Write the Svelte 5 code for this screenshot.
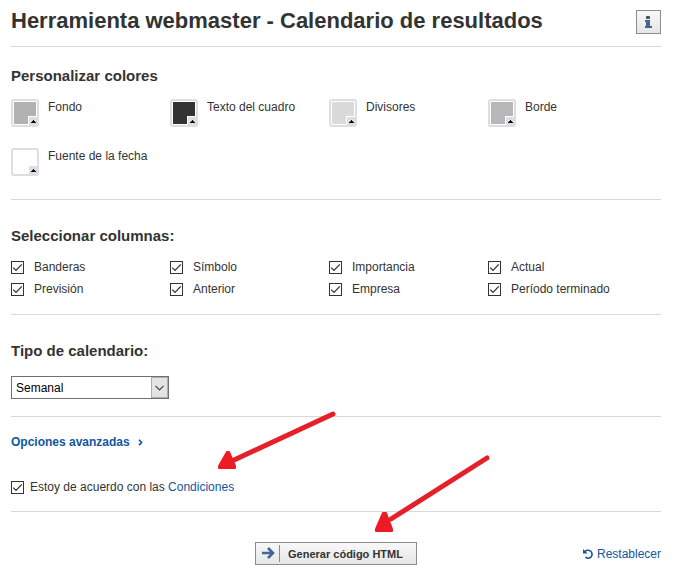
<script>
  let colors = $state([
    { id: 'bg', label: 'Fondo', value: '#b2b2b2' },
    { id: 'text', label: 'Texto del cuadro', value: '#333333' },
    { id: 'dividers', label: 'Divisores', value: '#dadada' },
    { id: 'border', label: 'Borde', value: '#b8b8b8' },
    { id: 'date', label: 'Fuente de la fecha', value: '#ffffff' }
  ]);

  let columns = $state([
    { id: 'flags', label: 'Banderas', checked: true },
    { id: 'symbol', label: 'Símbolo', checked: true },
    { id: 'importance', label: 'Importancia', checked: true },
    { id: 'actual', label: 'Actual', checked: true },
    { id: 'forecast', label: 'Previsión', checked: true },
    { id: 'previous', label: 'Anterior', checked: true },
    { id: 'company', label: 'Empresa', checked: true },
    { id: 'period', label: 'Período terminado', checked: true }
  ]);

  let calendarType = $state('weekly');
  let agreed = $state(true);

  function reset() {
    columns.forEach((c) => (c.checked = true));
    calendarType = 'weekly';
    agreed = true;
  }
</script>

<main class="page">
  <header class="header">
    <h1>Herramienta webmaster - Calendario de resultados</h1>
    <button class="info" type="button" aria-label="Información">
      <svg width="7" height="12" viewBox="0 0 7 12">
        <rect x="1" y="0" width="4" height="3" rx="1" fill="#3d5468" />
        <path d="M0 4h5v6h2v2H0v-2h1V6H0z" fill="#44658c" />
      </svg>
    </button>
  </header>

  <section class="section first">
    <h2>Personalizar colores</h2>
    <div class="grid swatches">
      {#each colors as color (color.id)}
        <div class="color">
          <button class="swatch" type="button" id={color.id} aria-label={color.label}>
            <span class="fill" style="background: {color.value}"></span>
            <svg class="corner" width="8" height="8" viewBox="0 0 8 8">
              <rect width="8" height="8" fill="#dcdee3" />
              <path d="M4 3h1v1h1v1h1v1H2V5h1V4h1z" fill="#111" />
            </svg>
          </button>
          <label for={color.id}>{color.label}</label>
        </div>
      {/each}
    </div>
  </section>

  <section class="section">
    <h2>Seleccionar columnas:</h2>
    <div class="grid columns">
      {#each columns as column (column.id)}
        <label class="check">
          <input type="checkbox" bind:checked={column.checked} />
          {column.label}
        </label>
      {/each}
    </div>
  </section>

  <section class="section type">
    <h2><label for="calendar-type">Tipo de calendario:</label></h2>
    <div class="select">
      <select id="calendar-type" bind:value={calendarType}>
        <option value="weekly">Semanal</option>
        <option value="daily">Diario</option>
      </select>
      <span class="toggle">
        <svg width="9" height="6" viewBox="0 0 9 6">
          <path d="M.5 .8l4 4 4-4" fill="none" stroke="#444" stroke-width="1.2" />
        </svg>
      </span>
    </div>
  </section>

  <section class="section terms">
    <a class="advanced" href="#advanced">
      Opciones avanzadas
      <svg width="5" height="7" viewBox="0 0 5 7">
        <path d="M1 .7l2.6 2.8L1 6.3" fill="none" stroke="#1256a0" stroke-width="1.6" />
      </svg>
    </a>
    <div class="agree">
      <input id="agree" type="checkbox" bind:checked={agreed} />
      <p><label for="agree">Estoy de acuerdo con las</label> <a href="#terms">Condiciones</a></p>
    </div>
    <svg class="pointer to-terms" width="120" height="60" viewBox="0 0 120 60" aria-hidden="true">
      <path d="M117 4L18 50" stroke="#e5202a" stroke-width="5" stroke-linecap="round" />
      <path d="M11 42L3 56v2h16v-2L13 42z" fill="#ed1c24" stroke="#ed1c24" stroke-width="2" stroke-linejoin="round" />
    </svg>
  </section>

  <footer class="footer">
    <button class="generate" type="button" disabled={!agreed}>
      <span class="arrow">
        <svg width="13" height="12" viewBox="0 0 13 12">
          <path d="M0 6h11M6 1l5 5-5 5" fill="none" stroke="#44659a" stroke-width="2.6" />
        </svg>
      </span>
      Generar código HTML
    </button>
    <button class="reset" type="button" onclick={reset}>
      <svg width="10" height="10" viewBox="0 0 10 10">
        <path d="M1.6 3.2A4 4 0 1 1 2.4 8.2" fill="none" stroke="#1256a0" stroke-width="1.6" />
        <path d="M0 0v4.6h4.6z" fill="#1256a0" />
      </svg>
      Restablecer
    </button>
    <svg class="pointer to-generate" width="120" height="80" viewBox="0 0 120 80" aria-hidden="true">
      <path d="M114 4L18 65" stroke="#e5202a" stroke-width="5" stroke-linecap="round" />
      <path d="M10 59L3 75v2h16v-2L13 59z" fill="#ed1c24" stroke="#ed1c24" stroke-width="2" stroke-linejoin="round" />
    </svg>
  </footer>
</main>

<style>
  :global(body) {
    margin: 0;
    background: #fff;
  }

  .page {
    padding: 0 17px 10px 11px;
    font-family: 'Liberation Sans', Arial, sans-serif;
    font-size: 12px;
    line-height: 16px;
    color: #333;
  }

  button,
  select {
    font-family: inherit;
    font-size: inherit;
    color: inherit;
  }

  a {
    color: #1256a0;
    text-decoration: none;
  }

  p {
    margin: 0;
  }

  svg {
    display: block;
  }

  .header {
    display: flex;
    align-items: flex-start;
    justify-content: space-between;
    padding: 10px 0 12px;
    border-bottom: 1px solid #d9d9d9;
  }

  h1 {
    margin: 0;
    font-size: 22px;
    line-height: 22px;
  }

  h2 {
    margin: 0;
    font-size: 15px;
    line-height: 20px;
  }

  .info {
    display: flex;
    align-items: center;
    justify-content: center;
    width: 25px;
    height: 24px;
    padding: 0;
    border: 1px solid #8c8c8c;
    background: linear-gradient(#f8f8f8, #e6e6e6);
  }

  .section {
    padding: 26px 0 14px;
    border-bottom: 1px solid #d9d9d9;
  }

  .section.first {
    padding: 19px 0 23px;
  }

  .section.type {
    padding-bottom: 17px;
  }

  .section.terms {
    position: relative;
    padding: 15px 0 13px;
  }

  .grid {
    display: grid;
    grid-template-columns: repeat(4, 1fr);
    padding-right: 14px;
  }

  .swatches {
    row-gap: 21px;
    margin-top: 13px;
  }

  .color {
    display: flex;
    gap: 9px;
  }

  .swatch {
    position: relative;
    width: 28px;
    height: 28px;
    padding: 1px;
    border: 2px solid #dcdee3;
    border-radius: 3px;
    background: #fff;
  }

  .fill {
    display: block;
    height: 100%;
  }

  .corner {
    position: absolute;
    right: 0;
    bottom: 0;
    border-top: 1px solid #fff;
    border-left: 1px solid #fff;
  }

  .columns {
    margin-top: 10px;
  }

  .check,
  .agree {
    display: flex;
    align-items: center;
    height: 22px;
  }

  .check {
    gap: 10px;
  }

  .agree {
    gap: 6px;
    margin-top: 24px;
  }

  input[type='checkbox'] {
    appearance: none;
    width: 13px;
    height: 13px;
    margin: 0;
    border: 1px solid #333;
    background: #fff;
  }

  input[type='checkbox']:checked {
    background: url("data:image/svg+xml,%3Csvg xmlns='http://www.w3.org/2000/svg' viewBox='0 0 11 11'%3E%3Cpath d='M1.2 5.6l2.8 2.8 5.8-6' fill='none' stroke='%23333' stroke-width='1.3'/%3E%3C/svg%3E") center / 11px 11px no-repeat;
  }

  .select {
    position: relative;
    width: 158px;
    margin-top: 15px;
  }

  select {
    display: block;
    appearance: none;
    width: 100%;
    height: 23px;
    padding: 0 20px 0 4px;
    border: 1px solid #707070;
    border-radius: 0;
    background: #fff;
    color: #000;
  }

  .toggle {
    position: absolute;
    top: 1px;
    right: 1px;
    bottom: 1px;
    display: flex;
    align-items: center;
    justify-content: center;
    width: 15px;
    border: 1px solid #adadad;
    background: #e3e3e3;
    pointer-events: none;
  }

  .advanced {
    display: flex;
    align-items: center;
    gap: 8px;
    height: 20px;
    font-weight: bold;
  }

  .footer {
    position: relative;
    display: grid;
    grid-template-columns: 1fr auto 1fr;
    align-items: center;
    padding-top: 30px;
  }

  .generate {
    grid-column: 2;
    display: flex;
    align-items: center;
    gap: 8px;
    height: 23px;
    padding: 0 13px 0 6px;
    border: 1px solid #8c8c8c;
    background: linear-gradient(#f8f8f8, #e6e6e6);
    font-size: 11px;
    font-weight: bold;
  }

  .arrow {
    padding: 2px 4px 3px 0;
    border-right: 1px solid #8c8c8c;
  }

  .reset {
    display: flex;
    align-items: center;
    justify-self: end;
    gap: 4px;
    padding: 0;
    border: 0;
    background: none;
    color: #1256a0;
  }

  /* red arrows drawn over the form */
  .pointer {
    position: absolute;
    pointer-events: none;
  }

  .to-terms {
    top: -7px;
    left: 205px;
  }

  .to-generate {
    top: -58px;
    left: 362px;
  }
</style>
